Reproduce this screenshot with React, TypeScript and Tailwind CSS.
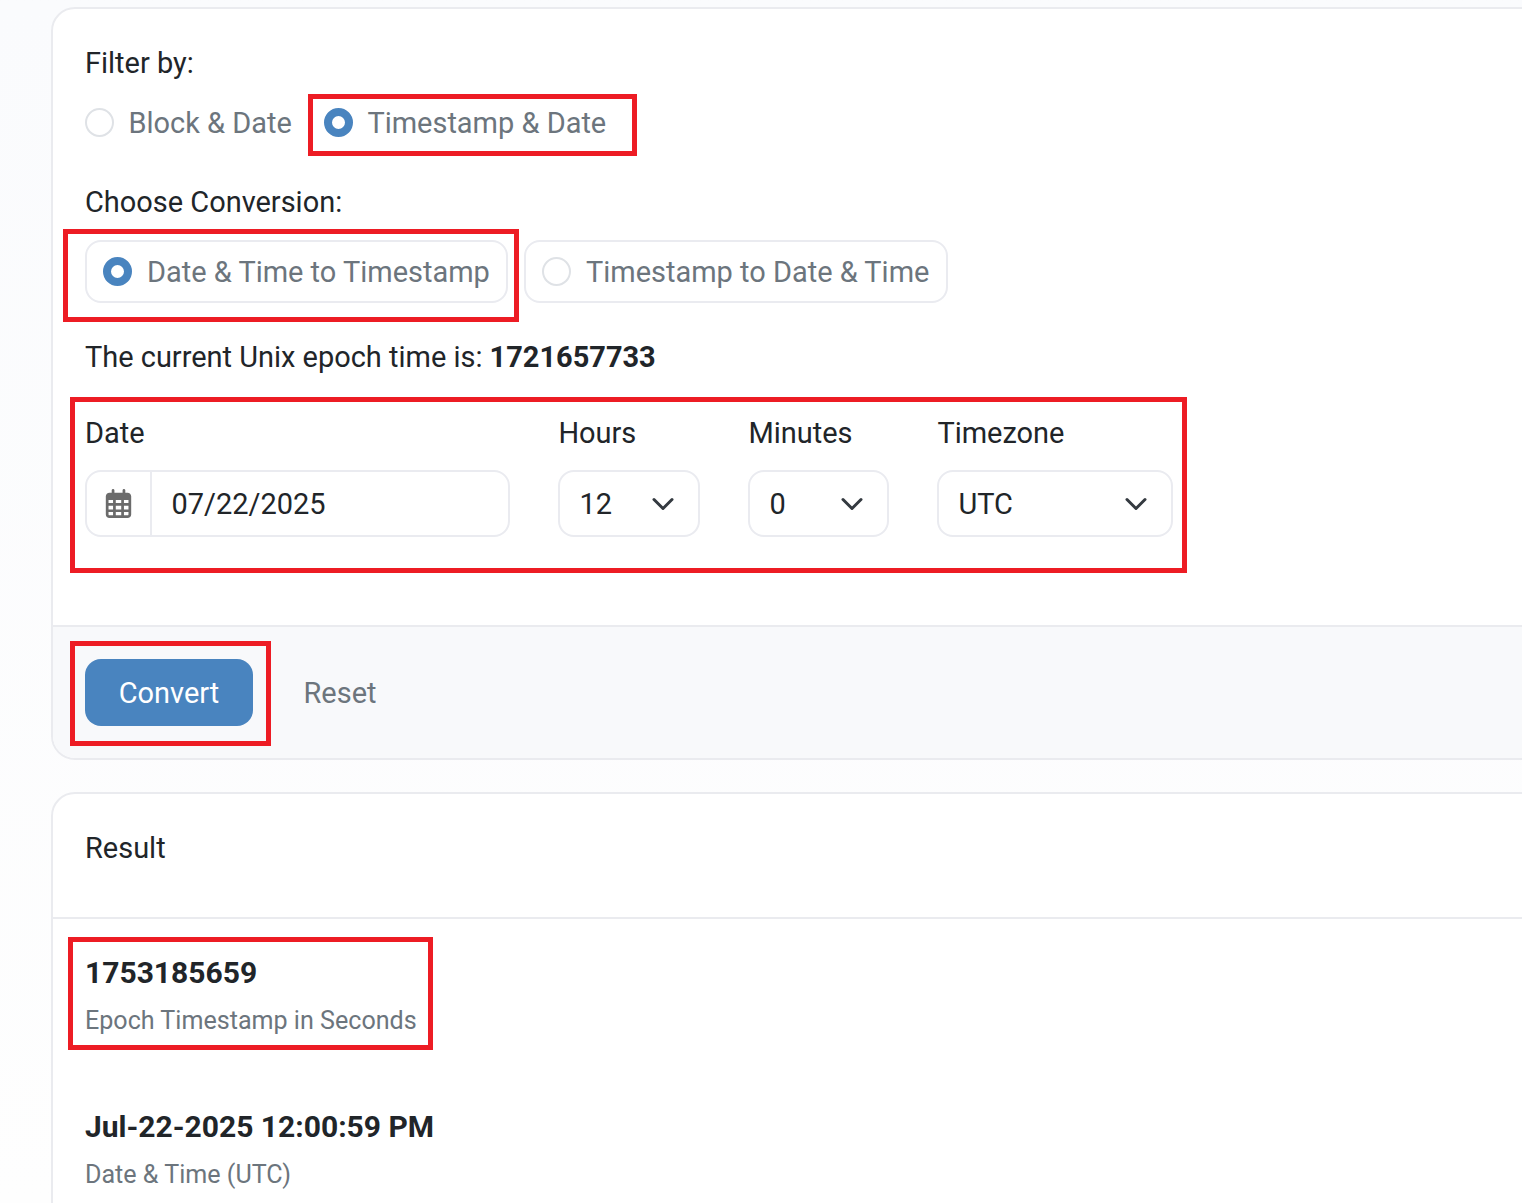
import type { ReactNode } from "react";
import { FaRegCalendarDays } from "react-icons/fa6";

function Highlight({ className }: { className: string }) {
  return <div className={`pointer-events-none absolute border-[5px] border-[#ed1c24] ${className}`} />;
}

function Radio({ checked = false, inline = false, children }: { checked?: boolean; inline?: boolean; children: ReactNode }) {
  return (
    <label className="flex h-11 items-center text-[#6c757d]">
      <span
        className={`size-[29px] shrink-0 rounded-full bg-white ${
          checked ? "border-8 border-[#4984bf]" : "border-2 border-[#dfe2e6]"
        } ${inline ? "mb-px" : ""}`}
      />
      <span className={`whitespace-nowrap ${inline ? "ml-[14.4px]" : "ml-[15px]"}`}>{children}</span>
    </label>
  );
}

function Select({ label, value, className }: { label: string; value: string; className: string }) {
  return (
    <div className={className}>
      <div className="h-11 pl-[0.4px] leading-[44px]">{label}</div>
      <div className="mt-[15px] flex h-[67px] items-center justify-between rounded-2xl border-2 border-[#eaebf0] pr-[23px] pl-[19.4px]">
        <span>{value}</span>
        <svg className="size-6" viewBox="0 0 16 16" fill="none" stroke="#343a40" strokeWidth="2" strokeLinecap="round" strokeLinejoin="round">
          <path d="m2 5 6 6 6-6" />
        </svg>
      </div>
    </div>
  );
}

export default function App() {
  return (
    <div className="h-[1203px] overflow-hidden bg-linear-to-b from-[#fafbfd] to-[#fefefe] pt-[7px] pl-[51px] font-['Roboto',sans-serif] text-[28.96px] leading-[44px] text-[#212529]">
      <section className="relative h-[753px] w-[1600px] overflow-hidden rounded-3xl border-2 border-[#eaebef] bg-white">
        <div className="h-[616px] px-8 pt-8">
          <div>Filter by:</div>
          <div className="mt-4 flex gap-8">
            <div className="w-[207px]">
              <Radio inline>Block &amp; Date</Radio>
            </div>
            <Radio inline checked>Timestamp &amp; Date</Radio>
          </div>
          <div className="mt-[35px]">Choose Conversion:</div>
          <div className="mt-4 flex gap-4">
            <div className="flex h-[63px] w-[423px] items-center rounded-2xl border-2 border-[#eaebf0] pl-4">
              <Radio checked>Date &amp; Time to Timestamp</Radio>
            </div>
            <div className="flex h-[63px] w-[424px] items-center rounded-2xl border-2 border-[#eaebf0] pl-4">
              <Radio>Timestamp to Date &amp; Time</Radio>
            </div>
          </div>
          <div className="mt-8">
            The current Unix epoch time is: <b className="font-bold">1721657733</b>
          </div>
          <div className="mt-8 flex gap-12">
            <div className="w-[425px]">
              <div>Date</div>
              <div className="mt-[15px] flex h-[67px] rounded-2xl border-2 border-[#eaebf0]">
                <div className="flex w-[65px] items-center justify-center border-r-2 border-[#eaebf0]">
                  <FaRegCalendarDays className="size-[29px] text-[#6b6b6b]" />
                </div>
                <div className="flex items-center pl-[19.5px]">07/22/2025</div>
              </div>
            </div>
            <Select label="Hours" value="12" className="w-[142px]" />
            <Select label="Minutes" value="0" className="w-[141px]" />
            <Select label="Timezone" value="UTC" className="w-[236px]" />
          </div>
        </div>
        <div className="flex h-[133px] items-center border-t-2 border-[#eaebef] bg-[#f8f9fb] pl-8">
          <button className="h-[67px] w-[168px] rounded-2xl bg-[#4984bf] text-white">Convert</button>
          <button className="ml-[50.5px] text-[#6c757d]">Reset</button>
        </div>
        <Highlight className="top-[85px] left-[255px] h-[62px] w-[329px]" />
        <Highlight className="top-[220px] left-[10px] h-[93px] w-[456px]" />
        <Highlight className="top-[388px] left-[17px] h-[176px] w-[1117px]" />
        <Highlight className="top-[632px] left-[17px] h-[105px] w-[201px]" />
      </section>

      <section className="relative mt-8 h-[600px] w-[1600px] rounded-3xl border-2 border-[#eaebef] bg-white">
        <div className="h-[125px] border-b-2 border-[#eaebef] px-8 pt-8">Result</div>
        <div className="px-8 pt-8">
          <div className="text-[30px] font-bold">1753185659</div>
          <div className="mt-[7px] text-[25.1px] leading-[38px] text-[#6c757d]">Epoch Timestamp in Seconds</div>
          <div className="mt-[65px] text-[30px] font-bold">Jul-22-2025 12:00:59 PM</div>
          <div className="mt-[7px] text-[25.1px] leading-[38px] text-[#6c757d]">Date &amp; Time (UTC)</div>
        </div>
        <Highlight className="top-[143px] left-[15px] h-[113px] w-[365px]" />
      </section>
    </div>
  );
}
